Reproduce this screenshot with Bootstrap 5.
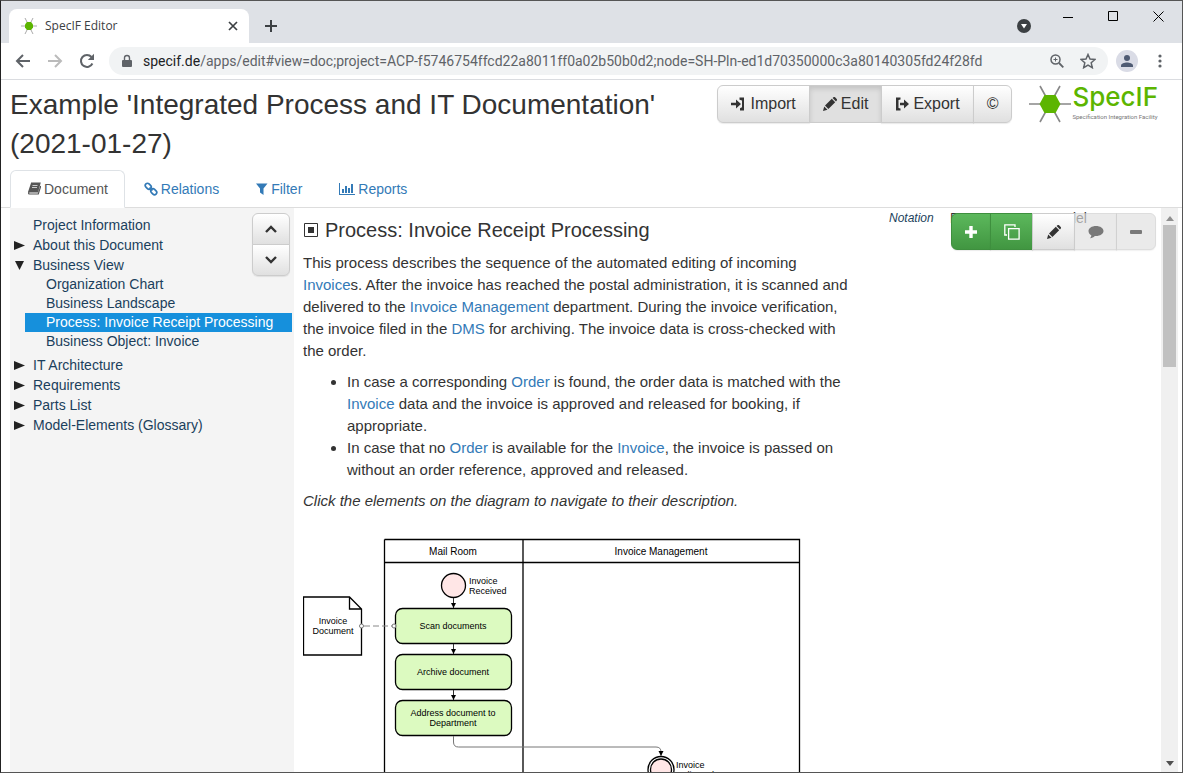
<!DOCTYPE html>
<html lang="en">
<head>
<meta charset="utf-8">
<meta name="viewport" content="width=device-width, initial-scale=1">
<title>SpecIF Editor</title>
<link href="https://cdn.jsdelivr.net/npm/bootstrap@5.3.0/dist/css/bootstrap.min.css" rel="stylesheet">
<style>
  body { font-family: "Liberation Sans", Arial, sans-serif; font-size: 14px; line-height: 20px; color: #333; background: #fff; }
  a { color: #337ab7; text-decoration: none; }
  svg { display: block; flex: none; }
  .window-frame { border: 1px solid #555; border-left-color: #222; overflow: hidden; }

  /* browser chrome */
  .tab-strip { background: #dee1e6; height: 42px; flex: none; font-family: "Open Sans", "Noto Sans", sans-serif; font-size: 12px; }
  .browser-tab { width: 240px; height: 34px; background: #fff; border-radius: 8px 8px 0 0; color: #3c4043; padding: 0 11px 0 12px; }
  .plain-btn { border: 0; background: none; padding: 0; color: #5f6368; }
  .window-controls { gap: 30px; padding: 0 18px 12px 0; }
  .address-row { height: 37px; flex: none; border-bottom: 1px solid #dadce0; font-family: Roboto, "Open Sans", sans-serif; padding: 0 16px 0 14px; }
  .nav-buttons { gap: 16px; width: 94px; }
  .omnibox { height: 28px; background: #f1f3f4; border-radius: 14px; padding: 0 12px; }
  .omnibox-url { font-size: 14px; color: #5f6368; padding-left: 10px; }
  .omnibox-url b { font-weight: 400; color: #202124; }
  .avatar { width: 22px; height: 22px; border-radius: 50%; background: #dadce6; color: #4f5b73; }

  /* application header */
  .app-header { padding: 5px 24px 0 9px; }
  .app-title { font-size: 28px; line-height: 39px; font-weight: 400; margin: 0 0 7px; width: 660px; }
  .tool-btn { --bs-btn-font-size: 16px; --bs-btn-line-height: 22px; --bs-btn-padding-y: 7px; --bs-btn-padding-x: 13px;
    --bs-btn-color: #333; --bs-btn-border-color: #ccc; --bs-btn-hover-color: #333; --bs-btn-hover-border-color: #adadad;
    --bs-btn-disabled-color: #333; --bs-btn-disabled-border-color: #ccc; --bs-btn-disabled-opacity: .65; --bs-btn-active-color: #333; --bs-btn-active-border-color: #ccc;
    background: linear-gradient(#fff, #e0e0e0); display: inline-flex; align-items: center; justify-content: center; gap: 4px; box-shadow: 0 1px 1px rgba(0,0,0,.08); }
  .tool-btn.active { background: #e0e0e0; box-shadow: inset 0 3px 5px rgba(0,0,0,.125); }
  .tool-btn:disabled { background: #e0e0e0; }
  .btn-add { background: linear-gradient(#5cb85c, #419641); --bs-btn-border-color: #3e8f3e; --bs-btn-color: #fff; --bs-btn-hover-color: #fff; }
  .logo-name { font-family: "Inter", sans-serif; font-weight: 500; font-size: 26px; line-height: 24px; color: #5cb500; }
  .logo-sub { font-family: Roboto, sans-serif; font-size: 6px; line-height: 16px; color: #777; white-space: nowrap; }
  .app-tabs { --bs-nav-tabs-border-color: #ddd; padding-left: 9px; }
  .app-tabs .nav-link { --bs-nav-link-padding-y: 8px; --bs-nav-link-padding-x: 16px; color: #337ab7; margin-right: 2px; display: flex; align-items: center; gap: 3px; }
  .app-tabs .nav-link.active { --bs-nav-tabs-link-active-color: #555; }

  /* outline */
  .outline { flex: 0 0 284px; margin-left: 9px; background: #f4f4f4; padding: 7px 2px 0 0; }
  .outline ul { list-style: none; margin: 0; padding: 0; }
  .outline a { color: #1b3f5c; display: block; padding-left: 23px; }
  .outline .tree-node { position: relative; }
  .outline .tree-node > svg { position: absolute; left: 4px; top: 6px; }
  .outline ul ul { padding: 0 0 4px 15px; line-height: 19px; }
  .outline ul ul a { padding-left: 21px; }
  .outline a.current { background: #1690dc; color: #fff; }
  .outline-steps { top: 5px; right: 4px; }
  .outline-steps .tool-btn { width: 38px; height: 32px; --bs-btn-padding-x: 0px; --bs-btn-padding-y: 0px; }

  /* document */
  .doc-pane { padding: 5px 0 0 9px; overflow: hidden; }
  .doc-title { font-size: 20px; line-height: 34px; font-weight: 400; margin: 0 0 5px; gap: 7px; }
  .doc-main { width: 550px; font-size: 15px; line-height: 22px; }
  .doc-main p { margin: 0 0 9px; }
  .doc-main ul { margin: 0 0 9px; padding-left: 44px; }
  .doc-props { margin-left: 36px; font-size: 12px; line-height: 10px; }
  .doc-props dt { font-weight: 400; font-style: italic; color: #1b3f5c; width: 61px; }
  .doc-props dd { font-size: 14px; margin: 0; white-space: nowrap; }
  .doc-actions { top: 5px; right: 5px; }
  .doc-actions .tool-btn { height: 37px; width: 43px; --bs-btn-padding-x: 0px; }
  .doc-actions .tool-btn:first-child, .doc-actions .tool-btn:last-child { width: 40px; }
  .diagram { margin-top: 26px; }
  .diagram text { font-family: "Liberation Sans", Arial, sans-serif; font-size: 9px; fill: #000; }
  .diagram .lane-name { font-size: 10px; }
  .scroll-track { flex: 0 0 17px; background: #f0f0f0; padding: 8px 2px 6px; margin-right: 4px; }
  .scroll-thumb { height: 142px; background: #c1c1c1; margin-top: 4px; }
</style>
</head>
<body>
<div class="window-frame vh-100 d-flex flex-column">
  <div class="tab-strip d-flex align-items-end ps-2">
    <div class="browser-tab d-flex align-items-center">
      <svg width="16" height="16" viewBox="0 0 16 16"><path d="M0 8h16M4 0l8 16M12 0L4 16" stroke="#aaa"/><path d="M6 4h4l2 2.500v3L10 12H6L4 9.500v-3z" fill="#5cb500"/></svg>
      <span class="ms-2 flex-grow-1">SpecIF Editor</span>
      <button class="plain-btn" aria-label="Close tab"><svg width="10" height="10" viewBox="0 0 10 10"><path d="M1 1l8 8M9 1L1 9" stroke="#3c4043" stroke-width="1.700"/></svg></button>
    </div>
    <button class="plain-btn align-self-center ms-3 mt-2" aria-label="New tab"><svg width="12" height="12" viewBox="0 0 12 12"><path d="M6 0v12M0 6h12" stroke="#3c4043" stroke-width="2"/></svg></button>
    <div class="ms-auto d-flex align-items-center align-self-center">
      <button class="plain-btn me-4 mt-2" aria-label="Tab search"><svg width="14" height="14" viewBox="0 0 14 14"><circle cx="7" cy="7" r="7" fill="#3c4043"/><path d="M4 5h6L7 9.500z" fill="#fff"/></svg></button>
      <div class="window-controls d-flex align-items-center ps-2">
        <button class="plain-btn" aria-label="Minimize"><svg width="11" height="11" viewBox="0 0 11 11"><path d="M0 6.500h10" stroke="#000"/></svg></button>
        <button class="plain-btn ms-1" aria-label="Maximize"><svg width="11" height="11" viewBox="0 0 11 11"><path d="M.5.5h9v9h-9z" fill="none" stroke="#000"/></svg></button>
        <button class="plain-btn ms-1" aria-label="Close"><svg width="11" height="11" viewBox="0 0 11 11"><path d="M.5.5l10 10M10.500.5l-10 10" stroke="#000"/></svg></button>
      </div>
    </div>
  </div>
  <div class="address-row d-flex align-items-center">
    <div class="nav-buttons d-flex">
      <button class="plain-btn" aria-label="Back"><svg width="16" height="16" viewBox="0 0 16 16"><path d="M15 8H2M8 2L2 8l6 6" fill="none" stroke="#5f6368" stroke-width="2"/></svg></button>
      <button class="plain-btn" aria-label="Forward"><svg width="16" height="16" viewBox="0 0 16 16"><path d="M1 8h13M8 2l6 6-6 6" fill="none" stroke="#bbb" stroke-width="2"/></svg></button>
      <button class="plain-btn" aria-label="Reload"><svg width="16" height="16" viewBox="0 0 16 16"><path d="M13.400 10.500A6 6 0 1 1 12.500 4" fill="none" stroke="#5f6368" stroke-width="2"/><path d="M15 .8V7H8.800z" fill="#5f6368"/></svg></button>
    </div>
    <div class="omnibox d-flex align-items-center flex-grow-1">
      <svg width="12" height="14" viewBox="0 0 12 14"><path d="M2 6h8a1 1 0 0 1 1 1v5a1 1 0 0 1-1 1H2a1 1 0 0 1-1-1V7a1 1 0 0 1 1-1z" fill="#5f6368"/><path d="M3.500 6V4a2.500 2.500 0 0 1 5 0v2" fill="none" stroke="#5f6368" stroke-width="1.400"/></svg>
      <span class="omnibox-url text-nowrap flex-grow-1"><b>specif.de</b>/apps/edit#view=doc;project=ACP-f5746754ffcd22a8011ff0a02b50b0d2;node=SH-Pln-ed1d70350000c3a80140305fd24f28fd</span>
      <button class="plain-btn" aria-label="Zoom"><svg width="14" height="14" viewBox="0 0 14 14"><circle cx="5.500" cy="5.500" r="4.500" fill="none" stroke="#5f6368" stroke-width="1.500"/><path d="M9 9l4.300 4.300" stroke="#5f6368" stroke-width="1.800"/><path d="M5.500 3.500v4M3.500 5.500h4" stroke="#5f6368"/></svg></button>
      <button class="plain-btn ms-3" aria-label="Bookmark"><svg width="16" height="16" viewBox="0 0 16 16"><path d="M8 1.500l2 4.500 5 .5-3.800 3.300 1.100 4.900L8 12.100l-4.300 2.600 1.100-4.900L1 6.500 6 6z" fill="none" stroke="#5f6368" stroke-width="1.500"/></svg></button>
    </div>
    <button class="plain-btn avatar ms-2 d-flex align-items-center justify-content-center" aria-label="Profile"><svg width="12" height="12" viewBox="0 0 12 12"><circle cx="6" cy="3" r="3" fill="currentColor"/><path d="M0 12v-1.500C0 8.500 3.500 7.500 6 7.500s6 1 6 3V12z" fill="currentColor"/></svg></button>
    <button class="plain-btn ms-3 px-1" aria-label="Menu"><svg width="4" height="14" viewBox="0 0 4 14" fill="#5f6368"><circle cx="2" cy="2" r="1.600"/><circle cx="2" cy="7" r="1.600"/><circle cx="2" cy="12" r="1.600"/></svg></button>
  </div>

  <header class="app-header d-flex align-items-start flex-shrink-0">
    <h1 class="app-title">Example 'Integrated Process and IT Documentation' (2021-01-27)</h1>
    <div class="btn-group ms-auto">
      <button class="btn tool-btn"><svg width="15" height="14" viewBox="0 0 15 14" fill="#333"><path d="M0 5.800h5V2.500L10 7l-5 4.500V8.200H0z"/><path d="M8.500.5H13v13H9v-2.200l2-1V3.500l-2.500-.8z"/></svg>Import</button>
      <button class="btn tool-btn active"><svg width="14" height="14" viewBox="0 0 14 14" fill="#333"><path d="M0 14l1.200-4.500 3.300 3.300zM2 8.600L8.800 1.800l3.400 3.400L5.400 12zM9.600 1l.8-.7a1.200 1.200 0 0 1 1.700 0l1.600 1.600a1.200 1.200 0 0 1 0 1.700l-.7.8z"/></svg>Edit</button>
      <button class="btn tool-btn"><svg width="14" height="14" viewBox="0 0 14 14" fill="#333"><path d="M1 .5h4.500v2L3.500 3v8l2 .5v2H1z"/><path d="M5 5.800h4V2.500L14 7l-5 4.500V8.200H5z"/></svg>Export</button>
      <button class="btn tool-btn">©</button>
    </div>
    <a href="#" class="d-flex ms-3" aria-label="SpecIF">
      <svg width="44" height="38" viewBox="0 0 44 38"><path d="M1 19h42M12 1l20 36M32 1L12 37" stroke="#888" stroke-width="1.600"/><path d="M16.500 10h11l5 9-5 9h-11l-5-9z" fill="#5cb500"/></svg>
      <span class="d-block"><span class="logo-name d-block">SpecIF</span><span class="logo-sub d-block">Specification Integration Facility</span></span>
    </a>
  </header>
  <ul class="nav nav-tabs app-tabs flex-shrink-0">
    <li class="nav-item"><a class="nav-link active" href="#"><svg width="14" height="14" viewBox="0 0 14 14"><path d="M4 1h9l-2.500 9H2.300c-1 0-1 2 0 2h9L13.800 4" fill="none" stroke="#555" stroke-width="1.200"/><path d="M4 1h9l-2.500 9H1z" fill="#555"/><path d="M5.500 3.500h5M5 5.500h5" stroke="#fff" stroke-width=".7"/></svg>Document</a></li>
    <li class="nav-item"><a class="nav-link" href="#"><svg width="14" height="14" viewBox="0 0 14 14" fill="none" stroke="#337ab7" stroke-width="1.700"><rect x="1" y="2" width="6.500" height="4.400" rx="2.200" transform="rotate(45 4.200 4.200)"/><rect x="6.500" y="7.600" width="6.500" height="4.400" rx="2.200" transform="rotate(45 9.800 9.800)"/><path d="M5.500 5.500l3 3"/></svg>Relations</a></li>
    <li class="nav-item"><a class="nav-link" href="#"><svg width="13" height="12" viewBox="0 0 13 12"><path d="M1 .5h11.500L8.500 5.500V12L5 9.500v-4z" fill="#337ab7"/></svg>Filter</a></li>
    <li class="nav-item"><a class="nav-link" href="#"><svg width="17" height="14" viewBox="0 0 17 14" fill="#337ab7"><path d="M1 1h1v11h15v1H1zM4 7h2v4H4zM7 4h2v7H7zM10 6h2v5h-2zM13 2h2v9h-2z"/></svg>Reports</a></li>
  </ul>

  <main class="d-flex flex-grow-1 overflow-hidden">
    <nav class="outline position-relative">
      <ul>
        <li><a href="#">Project Information</a></li>
        <li class="tree-node"><svg width="11" height="9" viewBox="0 0 11 9"><path d="M0 0l11 4.500L0 9z" fill="#222"/></svg><a href="#">About this Document</a></li>
        <li class="tree-node"><svg width="11" height="9" viewBox="0 0 11 9"><path d="M1 0h9L5.500 9z" fill="#222"/></svg><a href="#">Business View</a>
          <ul>
            <li><a href="#">Organization Chart</a></li>
            <li><a href="#">Business Landscape</a></li>
            <li><a href="#" class="current">Process: Invoice Receipt Processing</a></li>
            <li><a href="#">Business Object: Invoice</a></li>
          </ul>
        </li>
        <li class="tree-node"><svg width="11" height="9" viewBox="0 0 11 9"><path d="M0 0l11 4.500L0 9z" fill="#222"/></svg><a href="#">IT Architecture</a></li>
        <li class="tree-node"><svg width="11" height="9" viewBox="0 0 11 9"><path d="M0 0l11 4.500L0 9z" fill="#222"/></svg><a href="#">Requirements</a></li>
        <li class="tree-node"><svg width="11" height="9" viewBox="0 0 11 9"><path d="M0 0l11 4.500L0 9z" fill="#222"/></svg><a href="#">Parts List</a></li>
        <li class="tree-node"><svg width="11" height="9" viewBox="0 0 11 9"><path d="M0 0l11 4.500L0 9z" fill="#222"/></svg><a href="#">Model-Elements (Glossary)</a></li>
      </ul>
      <div class="outline-steps btn-group-vertical position-absolute">
        <button class="btn tool-btn" aria-label="Previous"><svg width="12" height="8" viewBox="0 0 12 8"><path d="M1 7l5-5 5 5" fill="none" stroke="#333" stroke-width="2.400"/></svg></button>
        <button class="btn tool-btn" aria-label="Next"><svg width="12" height="8" viewBox="0 0 12 8"><path d="M1 1l5 5 5-5" fill="none" stroke="#333" stroke-width="2.400"/></svg></button>
      </div>
    </nav>

    <section class="doc-pane flex-grow-1 position-relative">
      <div class="d-flex align-items-start">
        <article class="doc-main flex-shrink-0">
          <h2 class="doc-title d-flex align-items-center"><svg width="15" height="15" viewBox="0 0 15 15"><path d="M1.500.5h13v13h-13z" fill="none" stroke="#333"/><path d="M5 4h6v6H5z" fill="#333"/></svg>Process: Invoice Receipt Processing</h2>
          <p>This process describes the sequence of the automated editing of incoming <a href="#">Invoice</a>s. After the invoice has reached the postal administration, it is scanned and delivered to the <a href="#">Invoice Management</a> department. During the invoice verification, the invoice filed in the <a href="#">DMS</a> for archiving. The invoice data is cross-checked with the order.</p>
          <ul>
            <li>In case a corresponding <a href="#">Order</a> is found, the order data is matched with the <a href="#">Invoice</a> data and the invoice is approved and released for booking, if appropriate.</li>
            <li>In case that no <a href="#">Order</a> is available for the <a href="#">Invoice</a>, the invoice is passed on without an order reference, approved and released.</li>
          </ul>
          <p><em>Click the elements on the diagram to navigate to their description.</em></p>
          <svg class="diagram" width="500" height="320" viewBox="0 0 500 320" role="img" aria-label="Invoice receipt process">
            <defs><marker id="arrow" markerWidth="6" markerHeight="6" refX="5" refY="2.500" orient="auto"><path d="M0 0l5 2.500L0 5z"/></marker></defs>
            <g fill="none" stroke="#000" stroke-width="1.300">
              <path d="M81.500 1.500h415V320M81.500 1.500V320M220 1.500V320M81.500 24.500h415"/>
              <path d="M.5 59h46L58.500 71v46H.5zM46.500 59v12h12" fill="#fff"/>
              <circle cx="150.500" cy="47.500" r="12" fill="#ffe6e6"/>
              <g fill="#dcfac0"><rect x="92.500" y="70.500" width="116" height="35" rx="7"/><rect x="92.500" y="116.500" width="116" height="35" rx="7"/><rect x="92.500" y="162.500" width="116" height="35" rx="7"/></g>
              <circle cx="358" cy="231.500" r="13" fill="#fff"/><circle cx="358" cy="231.500" r="10.500" fill="#ffe6e6"/>
            </g>
            <g fill="none" stroke="#333" marker-end="url(#arrow)"><path d="M150.500 60v10"/><path d="M150.500 106v10"/><path d="M150.500 152v10"/><path d="M150.500 198v6q0 5 5 5H353q5 0 5 5v4" stroke="#777"/></g>
            <path d="M61 88h29" stroke="#888" stroke-dasharray="6 3"/><circle cx="58.500" cy="88" r="2" fill="#fff" stroke="#777"/><circle cx="91" cy="88" r="2" fill="#fff" stroke="#777"/>
            <g text-anchor="middle"><text class="lane-name" x="150" y="17">Mail Room</text><text class="lane-name" x="358" y="17">Invoice Management</text><text x="30" y="86">Invoice</text><text x="30" y="96">Document</text><text x="150" y="91">Scan documents</text><text x="150" y="137">Archive document</text><text x="150" y="178">Address document to</text><text x="150" y="188">Department</text></g>
            <text x="166" y="46">Invoice</text><text x="166" y="56">Received</text><text x="373" y="230">Invoice</text><text x="373" y="240">Delivered</text>
          </svg>
        </article>
        <dl class="doc-props d-flex"><dt>Notation</dt><dd>BPMN Process Model</dd></dl>
      </div>
      <div class="doc-actions btn-group position-absolute">
        <button class="btn tool-btn btn-add" aria-label="Add"><svg width="12" height="12" viewBox="0 0 12 12"><path d="M6 0v12M0 6h12" stroke="#fff" stroke-width="3.400"/></svg></button>
        <button class="btn tool-btn btn-add" aria-label="Clone"><svg width="16" height="16" viewBox="0 0 16 16" fill="none" stroke="#fff" stroke-width="1.300"><path d="M4.600 4.600h10.500v10.500H4.600z"/><path d="M3 11H.8V.8H11V3"/></svg></button>
        <button class="btn tool-btn" aria-label="Edit"><svg width="14" height="14" viewBox="0 0 14 14" fill="#333"><path d="M0 14l1.200-4.500 3.300 3.300zM2 8.600L8.800 1.800l3.400 3.400L5.400 12zM9.600 1l.8-.7a1.200 1.200 0 0 1 1.700 0l1.600 1.600a1.200 1.200 0 0 1 0 1.700l-.7.8z"/></svg></button>
        <button class="btn tool-btn" aria-label="Comment" disabled><svg width="16" height="14" viewBox="0 0 16 14"><path d="M8 1c4.300 0 7.500 2.200 7.500 5S12.300 11 8 11l-1.200-.1C5.500 12.200 4 13 2 13.200c1-1 1.300-1.900 1.300-3C1.500 9.300.5 7.800.5 6 .5 3.200 3.700 1 8 1z" fill="#333"/></svg></button>
        <button class="btn tool-btn" aria-label="Delete" disabled><svg width="12" height="12" viewBox="0 0 12 12"><rect y="4" width="12" height="4" rx="1" fill="#333"/></svg></button>
      </div>
    </section>
    <div class="scroll-track d-flex flex-column">
      <svg class="mx-auto" width="8" height="5" viewBox="0 0 8 5"><path d="M0 5l4-5 4 5z" fill="#909090"/></svg>
      <div class="scroll-thumb"></div>
      <svg class="mx-auto mt-auto" width="8" height="5" viewBox="0 0 8 5"><path d="M0 0h8L4 5z" fill="#505050"/></svg>
    </div>
  </main>
</div>
<script src="https://cdn.jsdelivr.net/npm/bootstrap@5.3.0/dist/js/bootstrap.bundle.min.js"></script>
</body>
</html>
